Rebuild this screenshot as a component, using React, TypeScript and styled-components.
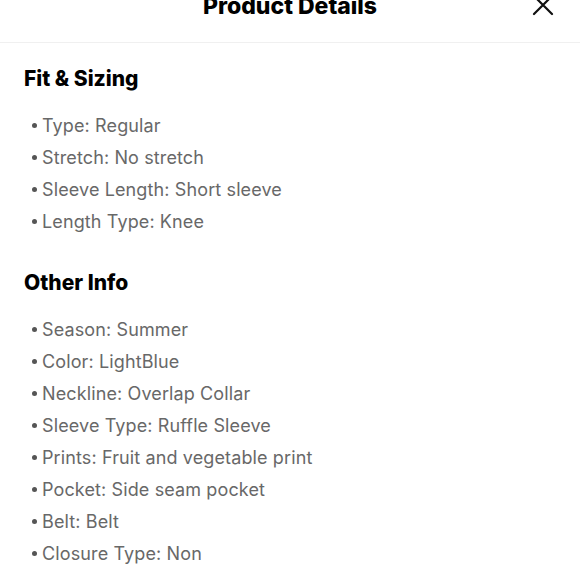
import React from "react";
import styled, { createGlobalStyle } from "styled-components";

const sections = [
  {
    title: "Fit & Sizing",
    items: [
      "Type: Regular",
      "Stretch: No stretch",
      "Sleeve Length: Short sleeve",
      "Length Type: Knee",
    ],
  },
  {
    title: "Other Info",
    items: [
      "Season: Summer",
      "Color: LightBlue",
      "Neckline: Overlap Collar",
      "Sleeve Type: Ruffle Sleeve",
      "Prints: Fruit and vegetable print",
      "Pocket: Side seam pocket",
      "Belt: Belt",
      "Closure Type: Non",
    ],
  },
];

export default function App() {
  return (
    <>
      <GlobalStyle />
      <Sheet>
        <Header>
          <Title>Product Details</Title>
          <CloseButton aria-label="Close">
            <svg width="22" height="22" viewBox="0 0 22 22" fill="none">
              <path
                d="M2 2L20 20M20 2L2 20"
                stroke="#111"
                strokeWidth="2.2"
                strokeLinecap="round"
              />
            </svg>
          </CloseButton>
        </Header>
        <Body>
          {sections.map((section) => (
            <Section key={section.title}>
              <SectionTitle>{section.title}</SectionTitle>
              <List>
                {section.items.map((item) => (
                  <Item key={item}>{item}</Item>
                ))}
              </List>
            </Section>
          ))}
        </Body>
      </Sheet>
    </>
  );
}

const GlobalStyle = createGlobalStyle`
  body {
    margin: 0;
    background: #fff;
    font-family: "Inter", "Liberation Sans", sans-serif;
    overflow: hidden;
  }
`;

const Sheet = styled.div`
  width: 580px;
  background: #fff;
`;

const Header = styled.header`
  position: relative;
  height: 42px;
  display: flex;
  justify-content: center;
  border-bottom: 1px solid #f0f0f0;
`;

const Title = styled.h1`
  margin: -8px 0 0;
  font-size: 23px;
  line-height: 28px;
  font-weight: 800;
  color: #000;
`;

const CloseButton = styled.button`
  position: absolute;
  right: 26px;
  top: -6px;
  padding: 0;
  border: 0;
  background: none;
  display: flex;
`;

const Body = styled.div`
  padding: 24px 24px 0;
  display: flex;
  flex-direction: column;
  gap: 34px;
`;

const Section = styled.section``;

const SectionTitle = styled.h2`
  margin: 0 0 18px;
  font-size: 21px;
  line-height: 24px;
  font-weight: 800;
  color: #000;
`;

const List = styled.ul`
  margin: 0;
  padding: 0 0 0 8px;
  list-style: none;
`;

const Item = styled.li`
  display: flex;
  align-items: center;
  height: 32px;
  font-size: 18px;
  letter-spacing: 0.12px;
  color: #686868;

  &::before {
    content: "";
    width: 5px;
    height: 5px;
    border-radius: 50%;
    background: #555;
    margin-right: 5px;
  }
`;
